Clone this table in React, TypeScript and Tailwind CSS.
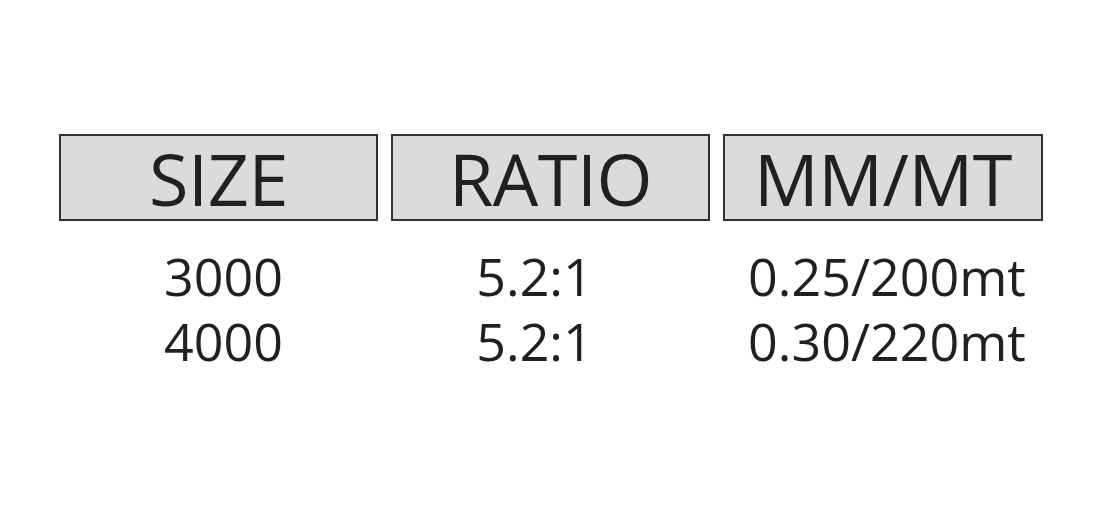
const headers = ["SIZE", "RATIO", "MM/MT"];

const rows = [
  ["3000", "5.2:1", "0.25/200mt"],
  ["4000", "5.2:1", "0.30/220mt"],
];

// small nudges so the values sit where they do in the catalogue
const cellShift = ["pl-[10px]", "pr-[32px]", "pl-[8px]"];

export default function App() {
  return (
    <div className="w-[1100px] h-[512px] bg-white text-[#221f1f] font-['Open_Sans',sans-serif] pt-[134px] pl-[59px]">
      <div className="grid grid-cols-[319px_319px_320px] gap-x-[13px]">
        {headers.map((h) => (
          <div
            key={h}
            className="h-[87px] border-[2.5px] border-[#333131] bg-[#dcdada] flex items-center justify-center text-[72px] leading-[82px] tracking-[-0.5px]"
          >
            {h}
          </div>
        ))}
      </div>
      <div className="mt-[22px] grid grid-cols-[319px_319px_320px] gap-x-[13px]">
        {rows.map((row) =>
          row.map((cell, i) => (
            <div key={row[0] + i} className={`text-center text-[52px] leading-[65px] ${cellShift[i]}`}>
              {cell}
            </div>
          ))
        )}
      </div>
    </div>
  );
}
